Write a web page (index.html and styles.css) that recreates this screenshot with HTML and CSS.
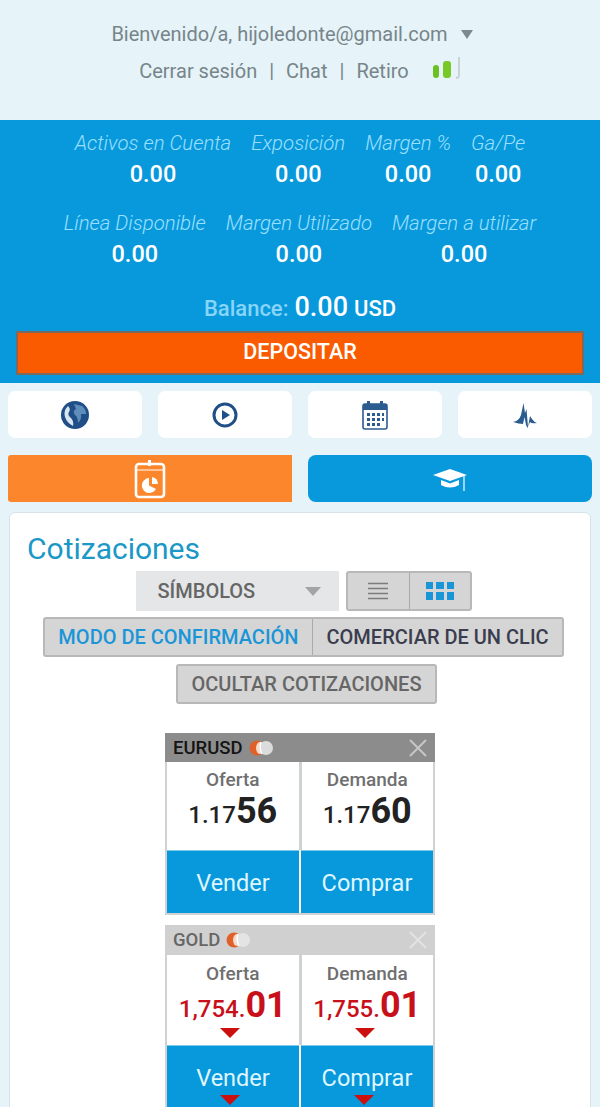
FILE: index.html
```html
<!DOCTYPE html>
<html lang="es">
<head>
    <meta charset="UTF-8">
    <meta name="viewport" content="width=device-width, initial-scale=1.0">
    <title>Cotizaciones</title>
    <link rel="stylesheet" href="styles.css">
</head>
<body>
    <div class="page">
        <div class="topbar">
            <div class="welcome">
                <span>Bienvenido/a, hijoledonte@gmail.com</span>
                <span class="welcome-caret"></span>
            </div>
            <div class="toplinks">
                <a href="#">Cerrar sesión</a>
                <span class="sep">|</span>
                <a href="#">Chat</a>
                <span class="sep">|</span>
                <a href="#">Retiro</a>
                <svg class="signal" width="29" height="26" viewBox="0 0 29 26">
                    <rect x="1" y="8" width="6" height="13" rx="3" fill="#6cc024"/>
                    <rect x="11" y="4" width="8" height="17" rx="3" fill="#78c828"/>
                    <path d="M27 0V18Q27 21 24 21" fill="none" stroke="#c9d2d4" stroke-width="2"/>
                </svg>
            </div>
        </div>

        <div class="account">
            <div class="stats">
                <div class="stat"><em>Activos en Cuenta</em><b>0.00</b></div>
                <div class="stat"><em>Exposición</em><b>0.00</b></div>
                <div class="stat"><em>Margen %</em><b>0.00</b></div>
                <div class="stat"><em>Ga/Pe</em><b>0.00</b></div>
            </div>
            <div class="stats">
                <div class="stat"><em>Línea Disponible</em><b>0.00</b></div>
                <div class="stat"><em>Margen Utilizado</em><b>0.00</b></div>
                <div class="stat"><em>Margen a utilizar</em><b>0.00</b></div>
            </div>
            <div class="balance">
                <span class="balance-label">Balance:</span>
                <span class="balance-value">0.00</span>
                <span class="balance-cur">USD</span>
            </div>
            <a class="deposit" href="#">DEPOSITAR</a>
        </div>

        <div class="tiles">
            <div class="tile">
                <svg width="30" height="30" viewBox="0 0 30 30">
                    <circle cx="15" cy="15" r="14" fill="#1f4f86"/>
                    <path d="M8 6Q3 11 5 17Q7 23 13 26Q14 21 11 18Q7 15 9 12Q11 9 8 6Z" fill="#d9e6f2"/>
                    <path d="M14 4L22 6Q26 9 26 14L21 14Q22 19 18 23Q18 17 15 15Q12 11 16 9Z" fill="#5f8dbb"/>
                </svg>
            </div>
            <div class="tile">
                <svg width="28" height="30" viewBox="0 0 28 30">
                    <circle cx="14" cy="15" r="11" fill="none" stroke="#1f4f86" stroke-width="3"/>
                    <path d="M11 10L19 15L11 20Z" fill="#1f4f86"/>
                </svg>
            </div>
            <div class="tile">
                <svg width="28" height="30" viewBox="0 0 28 30">
                    <path d="M4 4H24Q26 4 26 6V27Q26 29 24 29H4Q2 29 2 27V6Q2 4 4 4Z" fill="none" stroke="#2b5c90" stroke-width="1.600"/>
                    <rect x="2" y="4" width="24" height="6" fill="#2b5c90"/>
                    <rect x="6" y="1" width="3" height="6" fill="#2b5c90"/>
                    <rect x="19" y="1" width="3" height="6" fill="#2b5c90"/>
                    <path d="M6 13h3v3H6zM11 13h3v3h-3zM16 13h3v3h-3zM21 13h2v3h-2zM6 18h3v3H6zM11 18h3v3h-3zM16 18h3v3h-3zM21 18h2v3h-2zM6 23h3v3H6zM11 23h3v3h-3zM16 23h3v3h-3z" fill="#2b5c90"/>
                </svg>
            </div>
            <div class="tile">
                <svg width="28" height="30" viewBox="0 0 28 30">
                    <path d="M2 22Q8 21 10 15L12.500 3L14 13L15.500 9L17 27L19 16L21 19Q23 22 26 23Q20 24 19 22L16.500 28L15 25L13.500 17L12 24Q8 24 2 22Z" fill="#2b5c90"/>
                </svg>
            </div>
        </div>

        <div class="actions">
            <div class="action action-orange">
                <svg width="32" height="40" viewBox="0 0 32 40">
                    <rect x="2" y="5" width="28" height="33" rx="3" fill="none" stroke="#fff" stroke-width="2.600"/>
                    <path d="M2 11H30" stroke="#fff" stroke-width="1"/>
                    <rect x="14" y="1" width="3" height="6" fill="#fff"/>
                    <path d="M15 19A7.500 7.500 0 1 0 22 30L15 26.500Z" fill="#fff"/>
                    <path d="M18 18A7 7 0 0 1 24 25L18 25Z" fill="#fff"/>
                </svg>
            </div>
            <div class="action action-blue">
                <svg width="36" height="26" viewBox="0 0 36 26">
                    <path d="M18 3L35 9L18 15L1 9Z" fill="#fff"/>
                    <path d="M9 14L18 17.500L27 14V19Q18 24 9 19Z" fill="#fff"/>
                    <path d="M32 10V25" stroke="#fff" stroke-width="1.200"/>
                </svg>
            </div>
        </div>

        <div class="card">
            <h1>Cotizaciones</h1>

            <div class="controls controls-top">
                <div class="select">
                    <span>SÍMBOLOS</span>
                    <span class="select-caret"></span>
                </div>
                <div class="btn-group">
                    <div class="btn btn-icon">
                        <svg width="20" height="18" viewBox="0 0 20 18">
                            <path d="M0 1.500H20M0 6.500H20M0 11.500H20M0 16.500H20" stroke="#7c7c7c" stroke-width="1.500"/>
                        </svg>
                    </div>
                    <div class="btn btn-icon">
                        <svg width="28" height="18" viewBox="0 0 28 18">
                            <path d="M0 0h7v7H0zM10 0h8v7h-8zM21 0h7v7h-7zM0 10h7v8H0zM10 10h8v8h-8zM21 10h7v8h-7z" fill="#1a96d8"/>
                        </svg>
                    </div>
                </div>
            </div>

            <div class="controls">
                <div class="btn-group">
                    <div class="btn btn-text btn-active">MODO DE CONFIRMACIÓN</div>
                    <div class="btn btn-text btn-dark">COMERCIAR DE UN CLIC</div>
                </div>
            </div>

            <div class="controls controls-hide">
                <div class="btn-group">
                    <div class="btn btn-text">OCULTAR COTIZACIONES</div>
                </div>
            </div>

            <div class="quotes">
                <div class="quote">
                    <div class="quote-head quote-head-dark">
                        <span>EURUSD</span>
                        <svg class="flag" width="25" height="18" viewBox="0 0 25 18">
                            <circle cx="8" cy="9" r="7.500" fill="#e0602a"/>
                            <ellipse cx="11" cy="9" rx="4" ry="6" fill="#f6d9c8"/>
                            <circle cx="17" cy="9" r="7" fill="#dcdcdc"/>
                            <path d="M12 3Q10 9 13 15" fill="none" stroke="#fff" stroke-width="1.500"/>
                        </svg>
                        <svg class="close" width="18" height="18" viewBox="0 0 18 18">
                            <path d="M1 1L17 17M17 1L1 17" stroke="#c6c6c6" stroke-width="2"/>
                        </svg>
                    </div>
                    <div class="quote-prices">
                        <div class="price">
                            <span class="price-label">Oferta</span>
                            <span class="price-value"><small>1.17</small>56</span>
                        </div>
                        <div class="price">
                            <span class="price-label">Demanda</span>
                            <span class="price-value"><small>1.17</small>60</span>
                        </div>
                    </div>
                    <div class="quote-buttons">
                        <a href="#">Vender</a>
                        <a href="#">Comprar</a>
                    </div>
                </div>

                <div class="quote quote-down">
                    <div class="quote-head">
                        <span>GOLD</span>
                        <svg class="flag" width="25" height="18" viewBox="0 0 25 18">
                            <circle cx="8" cy="9" r="7.500" fill="#e0602a"/>
                            <ellipse cx="11" cy="9" rx="4" ry="6" fill="#f6d9c8"/>
                            <circle cx="17" cy="9" r="7" fill="#e4e4e4"/>
                            <path d="M12 3Q10 9 13 15" fill="none" stroke="#fff" stroke-width="1.500"/>
                        </svg>
                        <svg class="close" width="18" height="18" viewBox="0 0 18 18">
                            <path d="M1 1L17 17M17 1L1 17" stroke="#e2e2e2" stroke-width="2"/>
                        </svg>
                    </div>
                    <div class="quote-prices">
                        <div class="price">
                            <span class="price-label">Oferta</span>
                            <span class="price-value"><small>1,754.</small>01</span>
                            <span class="arrow"></span>
                        </div>
                        <div class="price">
                            <span class="price-label">Demanda</span>
                            <span class="price-value"><small>1,755.</small>01</span>
                            <span class="arrow"></span>
                        </div>
                    </div>
                    <div class="quote-buttons">
                        <a href="#">Vender<span class="arrow"></span></a>
                        <a href="#">Comprar<span class="arrow"></span></a>
                    </div>
                </div>
            </div>
        </div>
    </div>
</body>
</html>
```

FILE: styles.css
```css
* {
    box-sizing: border-box;
}

html, body {
    margin: 0;
    padding: 0;
    height: 1107px;
    overflow: hidden;
}

body {
    font-family: Roboto, "Liberation Sans", sans-serif;
    background-color: #e6f3f8;
}

a {
    text-decoration: none;
    color: inherit;
}

.page {
    width: 600px;
    height: 1107px;
    overflow: hidden;
}

.topbar {
    height: 120px;
    padding-top: 22px;
    color: #77858a;
    font-size: 20px;
}

.welcome {
    display: flex;
    justify-content: center;
    align-items: center;
    gap: 13px;
    height: 24px;
    padding-right: 16px;
}

.welcome-caret {
    width: 0;
    height: 0;
    border-left: 6px solid transparent;
    border-right: 6px solid transparent;
    border-top: 9px solid #7c8a8f;
}

.toplinks {
    display: flex;
    justify-content: center;
    align-items: center;
    gap: 12px;
    height: 26px;
    margin-top: 12px;
}

.signal {
    margin-left: 11px;
    margin-top: -2px;
}

.account {
    height: 263px;
    background-color: #0898dc;
    padding: 11px 16px 0;
    color: #fff;
}

.stats {
    display: flex;
    justify-content: center;
    gap: 20px;
    height: 80px;
}

.stat {
    display: flex;
    flex-direction: column;
    align-items: center;
}

.stat em {
    color: #9be0ff;
    font-size: 20.4px;
    font-weight: 300;
    line-height: 24px;
}

.stat b {
    font-size: 23.500px;
    font-weight: 500;
    line-height: 38px;
}

.balance {
    display: flex;
    justify-content: center;
    align-items: baseline;
    gap: 6px;
    height: 31px;
    font-weight: 500;
    font-size: 22px;
}

.balance-label {
    color: #87d5f8;
}

.balance-value {
    font-size: 27px;
}

.deposit {
    display: block;
    height: 44px;
    margin-top: 9px;
    background-color: #fb5b00;
    border: 2px solid #7b6a60;
    text-align: center;
    font-size: 21.500px;
    font-weight: 500;
    line-height: 38px;
}

.tiles {
    display: flex;
    gap: 16px;
    padding: 8px 8px 0;
}

.tile {
    flex: 1;
    height: 47px;
    display: flex;
    align-items: center;
    justify-content: center;
    background-color: #fff;
    border-radius: 7px;
}

.actions {
    display: flex;
    gap: 16px;
    padding: 17px 8px 0;
}

.action {
    flex: 1;
    height: 47px;
    display: flex;
    align-items: center;
    justify-content: center;
}

.action-orange {
    background-color: #fb862c;
    border-radius: 3px 0 0 3px;
}

.action-blue {
    background-color: #0898dc;
    border-radius: 8px;
}

.card {
    height: 620px;
    margin: 10px 9px 0;
    padding: 15px 10px 0 17px;
    background-color: #fff;
    border: 1px solid #d6e4ea;
    border-radius: 6px;
}

h1 {
    margin: 0 0 2px;
    color: #1b98c6;
    font-size: 30px;
    font-weight: 400;
    line-height: 41px;
}

.controls {
    display: flex;
    justify-content: center;
    gap: 7px;
    margin-bottom: 7px;
}

.controls-top {
    margin-bottom: 6px;
}

.controls-hide {
    margin-left: 6px;
}

.select {
    width: 203px;
    height: 40px;
    display: flex;
    align-items: center;
    justify-content: space-between;
    padding: 0 18px 0 22px;
    background-color: #e4e6e8;
    color: #666;
    font-size: 20px;
    font-weight: 500;
}

.select-caret {
    width: 0;
    height: 0;
    border-left: 8px solid transparent;
    border-right: 8px solid transparent;
    border-top: 9px solid #a2a4a6;
}

.btn-group {
    display: flex;
    height: 40px;
    background-color: #d5d5d5;
    border: 2px solid #b8b8b8;
    border-radius: 3px;
}

.btn {
    display: flex;
    align-items: center;
    justify-content: center;
    color: #666;
    font-size: 20px;
    font-weight: 500;
}

.btn + .btn {
    border-left: 1px solid #aaa;
}

.btn-icon {
    width: 61px;
}

.btn-text {
    padding: 0 13.500px;
}

.btn-active {
    color: #1a96d8;
}

.btn-dark {
    color: #3a3d4e;
}

.quotes {
    display: flex;
    flex-direction: column;
    align-items: center;
    gap: 10px;
    margin-top: 29px;
    margin-right: 7px;
}

.quote {
    width: 270px;
    border: 2px solid #cfd2d3;
    border-top: 0;
}

.quote-head {
    height: 30px;
    margin: 0 -2px;
    display: flex;
    align-items: center;
    gap: 6px;
    padding: 0 8px;
    background-color: #d0d0d0;
    color: #666;
    font-size: 18.500px;
    font-weight: 500;
}

.quote-head-dark {
    height: 29px;
    background-color: #8c8c8c;
    color: #141414;
}

.close {
    margin-left: auto;
}

.quote-prices {
    display: flex;
    gap: 3px;
    background-color: #cfd2d3;
}

.price {
    flex: 1;
    height: 88px;
    display: flex;
    flex-direction: column;
    align-items: center;
    background-color: #fff;
    padding-top: 7px;
}

.quote-down .price {
    height: 90px;
    padding-top: 8px;
}

.price-label {
    color: #6f6f6f;
    font-size: 19px;
    font-weight: 500;
    line-height: 22px;
}

.price-value {
    color: #222;
    font-size: 36px;
    font-weight: 700;
    line-height: 40px;
}

.price-value small {
    font-size: 24px;
    font-weight: 500;
}

.quote-down .price-value {
    color: #c8101a;
}

.arrow {
    display: block;
    width: 0;
    height: 0;
    border-left: 10px solid transparent;
    border-right: 10px solid transparent;
    border-top: 10px solid #cc1010;
}

.price .arrow {
    margin: -1px 5px 0 0;
}

.quote-buttons {
    display: flex;
    gap: 2px;
}

.quote-buttons a {
    flex: 1;
    height: 63px;
    background-color: #0898dc;
    box-shadow: inset 0 1px 0 #7cc9ec;
    color: #dff6ff;
    font-size: 23.500px;
    text-align: center;
    line-height: 66px;
}

.quote-buttons a .arrow {
    margin: -16px auto 0;
    position: relative;
    left: -3px;
}
```
